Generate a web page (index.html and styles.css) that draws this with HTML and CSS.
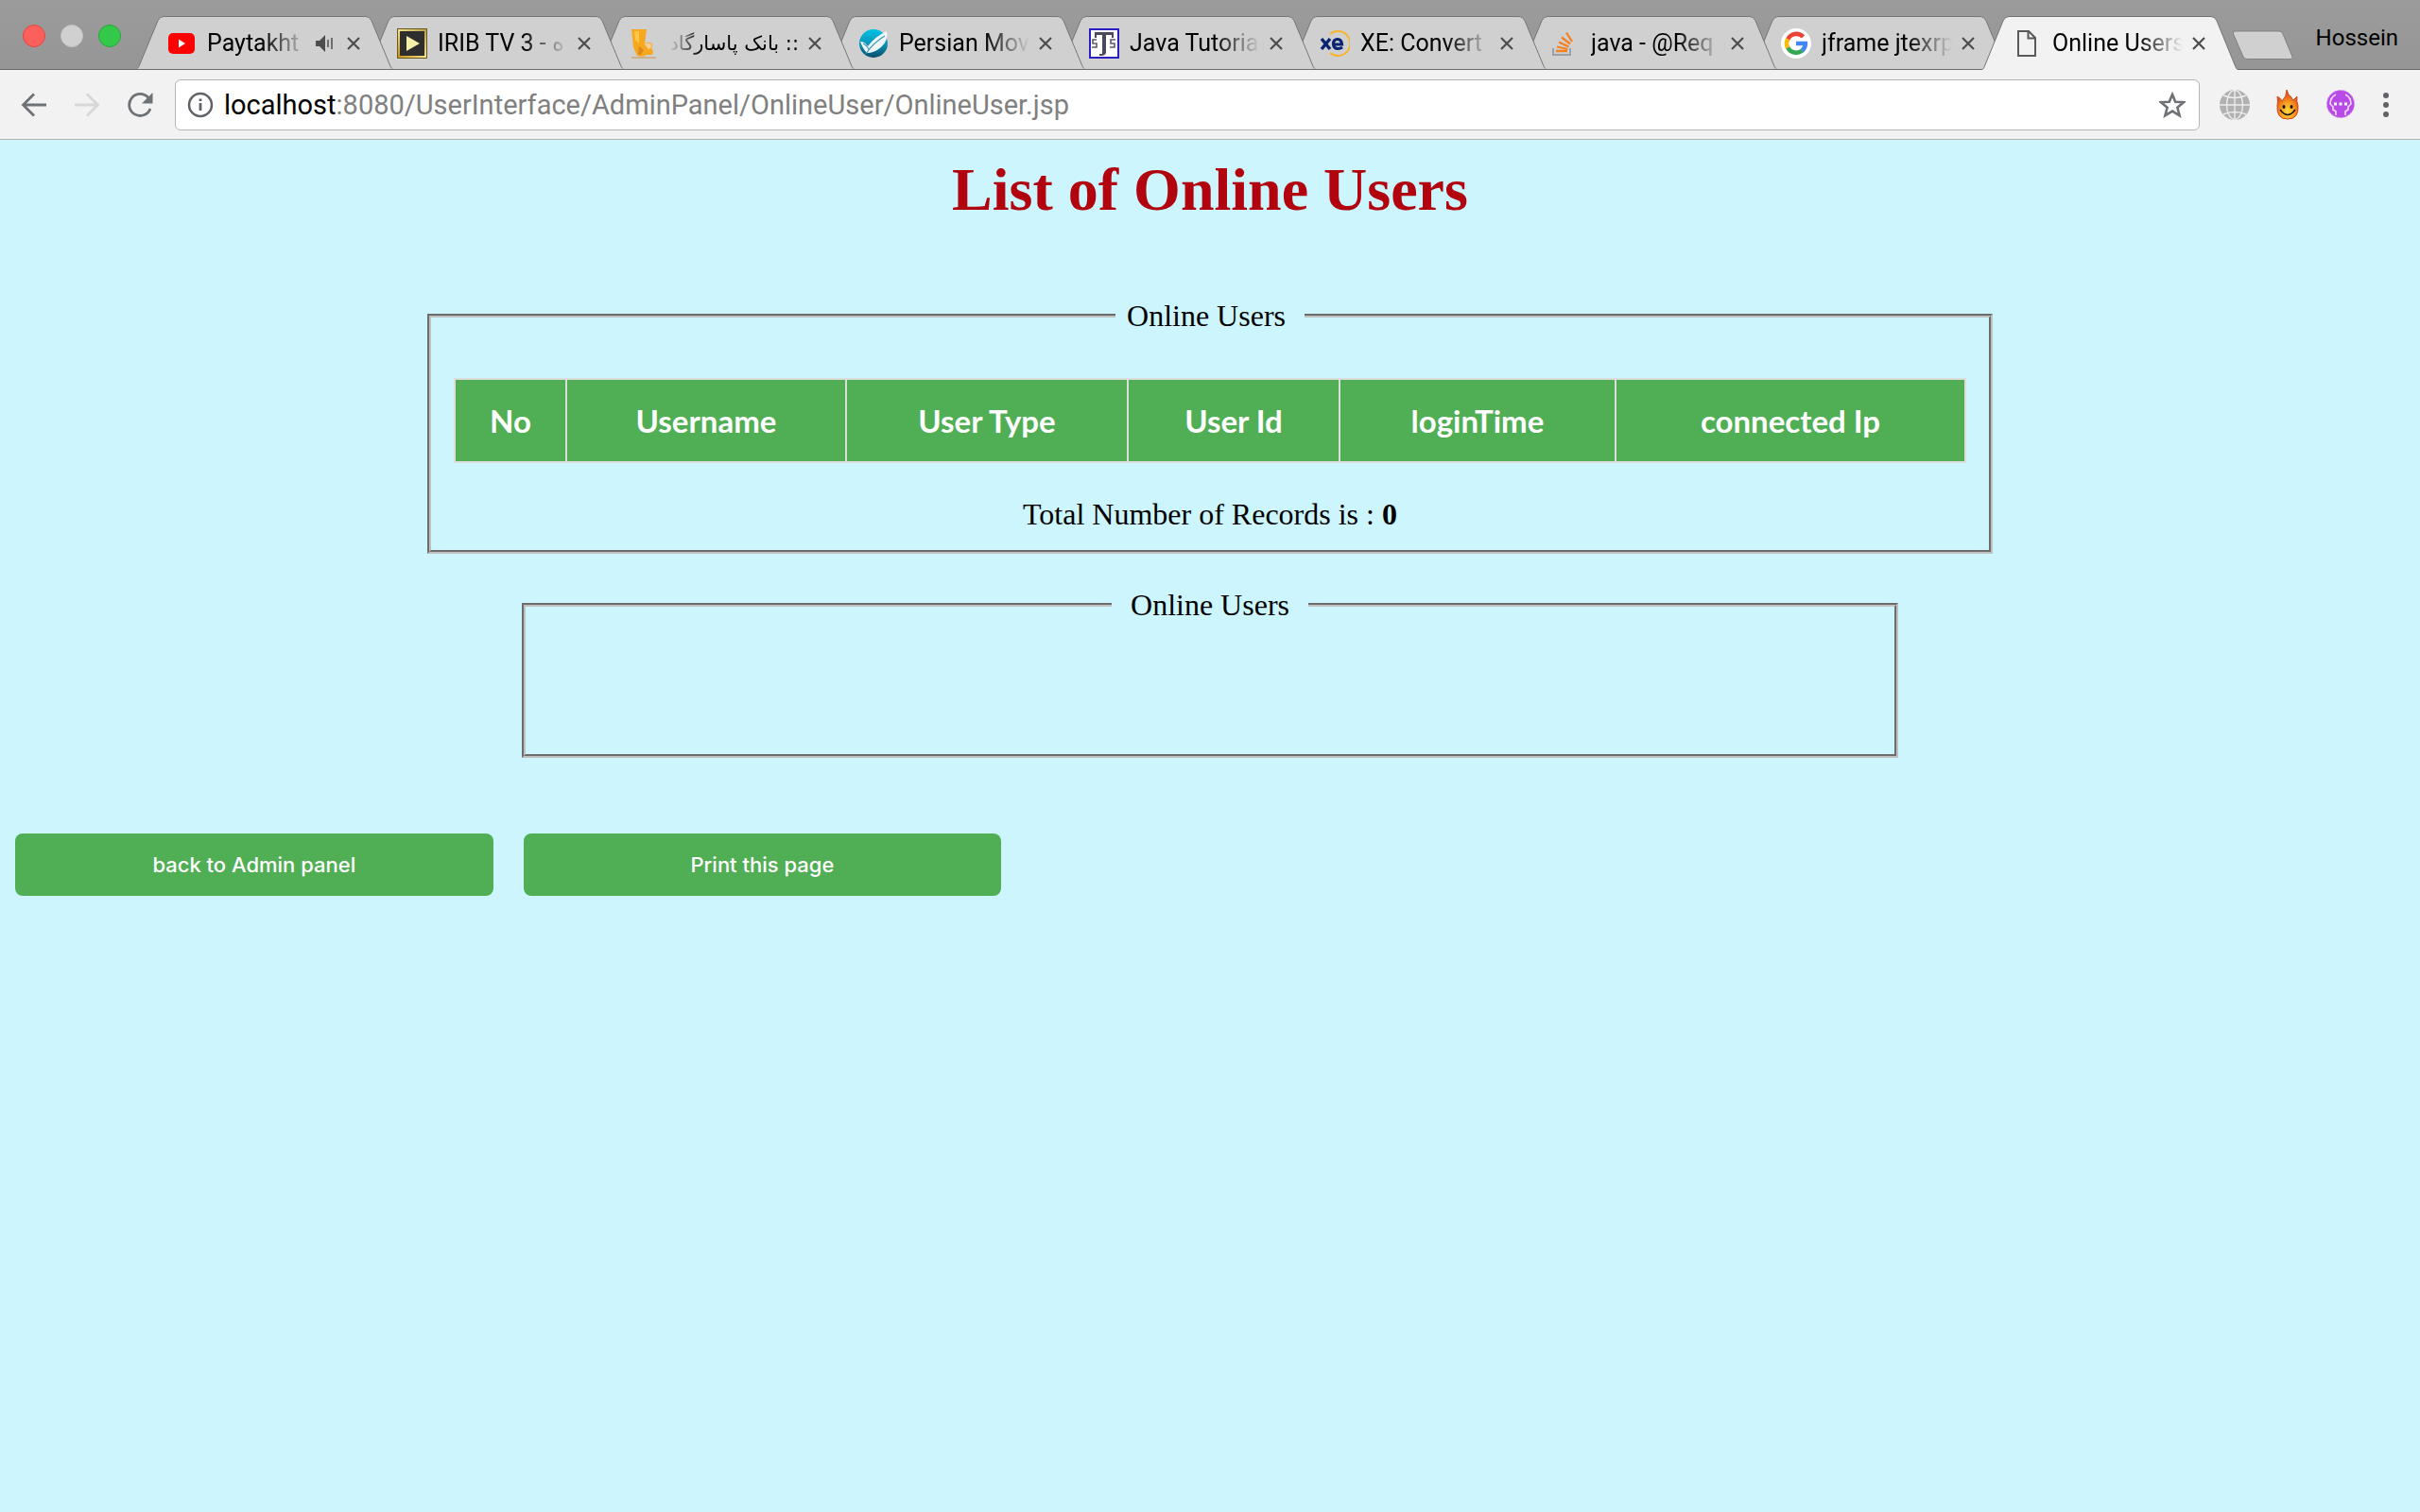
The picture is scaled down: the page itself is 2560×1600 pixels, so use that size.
FILE: index.html
```html
<!DOCTYPE html>
<html lang="en">
<head>
<meta charset="utf-8">
<title>Online Users</title>
<link rel="stylesheet" href="styles.css">
</head>
<body>
<svg class="defs" aria-hidden="true">
  <symbol id="tab-shape" viewBox="0 0 272 57" preserveAspectRatio="none"><path d="M0.5 57C2 56 2.500 55 3 54L23 5Q25 .5 29 .5H243Q247 .5 249 5L269 54C269.500 55 270 56 271.500 57" stroke-width="1"/></symbol>
  <symbol id="close" viewBox="0 0 16 16"><path d="M2 2L14 14M14 2L2 14" fill="none" stroke="#4d4d4d" stroke-width="2.200"/></symbol>
</svg>
<header class="browser">
  <div class="titlebar">
    <div class="lights"><span class="light red"></span><span class="light grey"></span><span class="light green"></span></div>
    <nav class="tabs">
      <div class="tab">
        <svg class="shape"><use href="#tab-shape"/></svg>
        <svg class="icon" viewBox="0 0 32 32"><rect x="2" y="5" width="28" height="22" rx="5" fill="#f00"/><path d="M13 11.500L20 16L13 20.500Z" fill="#fff"/></svg>
        <span class="name">Paytakht</span>
        <svg class="audio" viewBox="0 0 20 20"><path d="M1 7H5L11 1V19L5 13H1Z" fill="#4d4d4d"/><path d="M14 6V14M18 4V16" stroke="#4d4d4d" stroke-width="1.500"/></svg>
        <button class="close" aria-label="Close tab"><svg><use href="#close"/></svg></button>
      </div>
      <div class="tab">
        <svg class="shape"><use href="#tab-shape"/></svg>
        <svg class="icon" viewBox="0 0 32 32"><defs><linearGradient id="gold" x1="0" y1="1" x2="1" y2="0"><stop offset="0" stop-color="#c8981c"/><stop offset=".5" stop-color="#f3e08a"/><stop offset="1" stop-color="#b9a24b"/></linearGradient></defs><rect x=".5" y=".5" width="31" height="31" fill="#2e2e2e" stroke="#6b5a20"/><rect x="2" y="2" width="28" height="28" fill="#2e2e2e" stroke="url(#gold)" stroke-width="2"/><path d="M10 8L24 16L10 24Z" fill="#f6efa8"/></svg>
        <span class="name">IRIB TV 3 - ه</span>
        <button class="close" aria-label="Close tab"><svg><use href="#close"/></svg></button>
      </div>
      <div class="tab">
        <svg class="shape"><use href="#tab-shape"/></svg>
        <svg class="icon" viewBox="0 0 32 32"><path d="M4 31H30" stroke="#cdb08c" stroke-width="2"/><path d="M4 1H20L18 17Q20 14 24 15Q28 17 25 21Q28 24 26 28H20Q17 31 10 29L6 20Z" fill="#f6a821"/><path d="M7 3H12V16L8 12Z" fill="#fcc944"/><path d="M18 17Q22 14 25 17Q26 21 22 22Z" fill="#f3cf9a"/><path d="M12 19L17 23L14 28H11Z" fill="#dd8a1a"/></svg>
        <span class="name rtl" dir="rtl">:: بانک پاسارگاد</span>
        <button class="close" aria-label="Close tab"><svg><use href="#close"/></svg></button>
      </div>
      <div class="tab">
        <svg class="shape"><use href="#tab-shape"/></svg>
        <svg class="icon" viewBox="0 0 32 32"><defs><linearGradient id="sea" x1="0" y1="0" x2="0" y2="1"><stop offset="0" stop-color="#00c4e6"/><stop offset=".55" stop-color="#0b8fb5"/><stop offset="1" stop-color="#064b68"/></linearGradient></defs><circle cx="16" cy="16" r="15" fill="url(#sea)"/><path d="M2 14Q7 14 10 19Q17 9 30 3Q32 13 24 20Q17 26 9 26Q5 22 2 14Z" fill="#eef6f8"/><path d="M8 27Q16 15 28 8M11 22Q8 17 5 16" fill="none" stroke="#3497b5" stroke-width="1.200"/></svg>
        <span class="name">Persian Mov</span>
        <button class="close" aria-label="Close tab"><svg><use href="#close"/></svg></button>
      </div>
      <div class="tab">
        <svg class="shape"><use href="#tab-shape"/></svg>
        <svg class="icon" viewBox="0 0 32 32"><rect x="1" y="1" width="30" height="30" fill="#fff" stroke="#2a1fc0" stroke-width="2"/><path d="M6 4H26V10H24V7H18V26Q17 29 13 29H11V27H14V7H8V10H6Z" fill="#4a4a58"/><path d="M8 12H4V16H8V20H3M28 12H23V16H27V20H22" fill="none" stroke="#5b5b6c" stroke-width="1.600"/></svg>
        <span class="name">Java Tutoria</span>
        <button class="close" aria-label="Close tab"><svg><use href="#close"/></svg></button>
      </div>
      <div class="tab">
        <svg class="shape"><use href="#tab-shape"/></svg>
        <svg class="icon" viewBox="0 0 32 32"><path d="M11 6A13 13 0 1 1 11 26" fill="none" stroke="#f7b52c" stroke-width="2"/><path d="M2 11L11 22M11 11L2 22" stroke="#0a2472" stroke-width="3.500"/><path d="M15 17H23.500Q23 11.500 19 11.500Q14.500 11.500 14.500 16.500Q14.500 21.500 19.500 21.500Q22 21.500 24 20" fill="none" stroke="#0a2472" stroke-width="3.200"/></svg>
        <span class="name">XE: Convert</span>
        <button class="close" aria-label="Close tab"><svg><use href="#close"/></svg></button>
      </div>
      <div class="tab">
        <svg class="shape"><use href="#tab-shape"/></svg>
        <svg class="icon" viewBox="0 0 32 32"><path d="M3 21V28H21V21" fill="none" stroke="#9aa1a8" stroke-width="2"/><path d="M6 24H18M7 19.500L18.500 22M9 14.500L19.500 19.500M12 9.500L21 16.500M17 4.500L23 14" stroke="#f48024" stroke-width="2.300"/></svg>
        <span class="name">java - @Req</span>
        <button class="close" aria-label="Close tab"><svg><use href="#close"/></svg></button>
      </div>
      <div class="tab">
        <svg class="shape"><use href="#tab-shape"/></svg>
        <svg class="icon" viewBox="0 0 32 32"><circle cx="16" cy="16" r="16" fill="#fff"/><g fill="none" stroke-width="4.600"><path d="M23.500 9A10 10 0 0 0 7.300 11.500" stroke="#ea4335"/><path d="M7.300 11.200A10 10 0 0 0 7.300 20.800" stroke="#fbbc05"/><path d="M7.300 20.500A10 10 0 0 0 22.500 23.500" stroke="#34a853"/><path d="M22.300 23.700A10 10 0 0 0 25.800 16H16" stroke="#4285f4"/></g></svg>
        <span class="name">jframe jtexrp</span>
        <button class="close" aria-label="Close tab"><svg><use href="#close"/></svg></button>
      </div>
      <div class="tab active">
        <svg class="shape"><use href="#tab-shape"/></svg>
        <svg class="icon" viewBox="0 0 32 32"><path d="M7 3H18L25 10V29H7ZM17.500 3.500V10.500H25" fill="none" stroke="#5a5a5a" stroke-width="2"/></svg>
        <span class="name">Online Users</span>
        <button class="close" aria-label="Close tab"><svg><use href="#close"/></svg></button>
      </div>
    </nav>
    <button class="new-tab" aria-label="New tab"><svg viewBox="0 0 66 32"><path d="M3 1H50Q53 1 54 4L64 28Q65 30.500 62 30.500H16Q13 30.500 12 28L1.500 4Q.5 1 3 1Z" fill="#d0d0d0" stroke="#808080"/></svg></button>
    <span class="profile">Hossein</span>
  </div>
  <div class="toolbar">
    <button class="tool" aria-label="Back"><svg viewBox="0 0 28 28"><path d="M27 14H3M14 2.500L2.500 14L14 25.500" fill="none" stroke="#6e7276" stroke-width="2.800"/></svg></button>
    <button class="tool" aria-label="Forward"><svg viewBox="0 0 28 28"><path d="M1 14H25M14 2.500L25.500 14L14 25.500" fill="none" stroke="#d6d7d8" stroke-width="2.800"/></svg></button>
    <button class="tool" aria-label="Reload"><svg viewBox="0 0 28 28"><path d="M23 6.500A11.500 11.500 0 1 0 25 18" fill="none" stroke="#6e7276" stroke-width="2.800"/><path d="M27.500 1V12.500H16Z" fill="#6e7276"/></svg></button>
    <div class="address">
      <svg class="glyph" viewBox="0 0 28 28"><circle cx="14" cy="14" r="12" fill="none" stroke="#5f6368" stroke-width="2.500"/><path d="M14 12V20M14 7.500V10" stroke="#5f6368" stroke-width="2.800"/></svg>
      <span class="url"><span class="host">localhost</span>:8080/UserInterface/AdminPanel/OnlineUser/OnlineUser.jsp</span>
      <button class="tool" aria-label="Bookmark"><svg viewBox="0 0 28 28"><path d="M14 3L17.200 10.700L26 11.200L19.400 16.700L21.600 25.300L14 20.600L6.400 25.300L8.600 16.700L2 11.200L10.800 10.700Z" fill="none" stroke="#6e7276" stroke-width="2.600"/></svg></button>
    </div>
    <div class="extensions">
      <svg class="ext" viewBox="0 0 32 32"><circle cx="16" cy="16" r="16" fill="#b1b1b1"/><g fill="none" stroke="#ececec" stroke-width="1.400"><ellipse cx="16" cy="16" rx="8.500" ry="15.500"/><path d="M16 0V32M0 16H32M4 6Q16 11 28 6M4 26Q16 21 28 26"/></g></svg>
      <svg class="ext" viewBox="0 0 32 32"><defs><radialGradient id="fire" cx=".5" cy=".75" r=".6"><stop offset="0" stop-color="#ffd93b"/><stop offset=".5" stop-color="#f9a11f"/><stop offset="1" stop-color="#e2501c"/></radialGradient></defs><path d="M15 0Q16 5 20 8Q21 11 22 11Q24 9 26 7Q25 12 27 17Q28 31 16 31Q4 31 5 17Q6 12 5 7Q9 9 10 12Q15 7 15 0Z" fill="url(#fire)" stroke="#cf4a1b"/><ellipse cx="12" cy="18" rx="1.500" ry="2" fill="#1c1208"/><ellipse cx="20" cy="18" rx="1.500" ry="2" fill="#1c1208"/><path d="M8 21Q16 32 24 21" fill="none" stroke="#1c1208" stroke-width="1.500"/></svg>
      <svg class="ext" viewBox="0 0 32 32"><circle cx="16" cy="15" r="14.500" fill="#b84be8" stroke="#d58af5" stroke-dasharray="3 2"/><path d="M11 5Q5 8 5 15L8 18V21L11 23V27M21 5Q27 8 27 15L24 18V21L21 23V27" fill="none" stroke="#f3dcfd" stroke-width="1.600"/><path d="M9 15H12M14.500 15H17.500M20 15H23" stroke="#fff" stroke-width="3"/></svg>
    </div>
    <button class="tool menu" aria-label="Menu"><svg viewBox="0 0 28 28"><g fill="#5f6368"><circle cx="14" cy="4" r="3"/><circle cx="14" cy="14" r="3"/><circle cx="14" cy="24" r="3"/></g></svg></button>
  </div>
</header>
<main class="page">
  <h1>List of Online Users</h1>
  <fieldset class="panel users">
    <legend>&nbsp;Online Users&nbsp;&nbsp;</legend>
    <table class="grid">
      <colgroup><col class="c-no"><col class="c-name"><col class="c-type"><col class="c-id"><col class="c-time"><col class="c-ip"></colgroup>
      <thead><tr><th scope="col">No</th><th scope="col">Username</th><th scope="col">User Type</th><th scope="col">User Id</th><th scope="col">loginTime</th><th scope="col">connected Ip</th></tr></thead>
    </table>
    <p class="total">Total Number of Records is : <b>0</b></p>
  </fieldset>
  <fieldset class="panel empty">
    <legend>&nbsp;&nbsp;Online Users&nbsp;&nbsp;</legend>
  </fieldset>
  <div class="actions">
    <button class="action">back to Admin panel</button>
    <button class="action">Print this page</button>
  </div>
</main>
</body>
</html>
```
FILE: styles.css
```css
* { box-sizing: border-box; }

body {
  margin: 0;
  min-height: 100vh;
  background: #ccf5fe;
  color: #000;
  font-family: "Liberation Serif", "Times New Roman", serif;
  font-size: 32px;
}

button {
  padding: 0;
  border: 0;
  background: none;
  font: inherit;
}

svg { display: block; }
.defs { position: absolute; width: 0; height: 0; }

/* Browser window */
.browser { font-family: Roboto, "DejaVu Sans", sans-serif; }

.titlebar {
  display: flex;
  align-items: flex-end;
  height: 74px;
  padding-left: 24px;
  background: linear-gradient(#9b9b9b, #969696);
  box-shadow: inset 0 -1px #6b6b6b;
}

.lights {
  display: flex;
  gap: 16px;
  width: 120px;
  padding-bottom: 24px;
}

.light {
  width: 24px;
  height: 24px;
  border: 1px solid;
  border-radius: 50%;
}
.light.red { background: #fc605c; border-color: #e04642; }
.light.grey { background: #d0d0d0; border-color: #c2c2c2; }
.light.green { background: #34c84a; border-color: #24a838; }

.tabs { display: flex; }

.tab {
  position: relative;
  display: flex;
  align-items: center;
  width: 272px;
  height: 57px;
  padding: 0 34px 0 32px;
  font-size: 25px;
  line-height: 32px;
}
.tab + .tab { margin-left: -28px; }
.tab:nth-child(1) { z-index: 8; }
.tab:nth-child(2) { z-index: 7; }
.tab:nth-child(3) { z-index: 6; }
.tab:nth-child(4) { z-index: 5; }
.tab:nth-child(5) { z-index: 4; }
.tab:nth-child(6) { z-index: 3; }
.tab:nth-child(7) { z-index: 2; }
.tab:nth-child(8) { z-index: 1; }
.tab.active { z-index: 9; }

.shape {
  position: absolute;
  inset: 0;
  z-index: -1;
  width: 100%;
  height: 100%;
  fill: #d0d0d0;
  stroke: #757575;
}
.tab:not(.active) .shape { height: 56px; }
.tab.active .shape { fill: #f2f2f2; }

.icon {
  flex: none;
  width: 32px;
  height: 32px;
}

.name {
  flex: 1;
  margin-left: 11px;
  overflow: hidden;
  white-space: nowrap;
  mask-image: linear-gradient(to left, transparent, #000 48px);
}
.name.rtl {
  font-family: "DejaVu Sans", sans-serif;
  font-size: 21px;
  mask-image: linear-gradient(to right, transparent, #000 36px);
}

.audio {
  flex: none;
  width: 20px;
  height: 20px;
  margin: 0 4px 0 8px;
}

.close { flex: none; margin-left: 9px; }
.close svg { width: 16px; height: 16px; }

.new-tab { margin: 0 0 10px -7px; z-index: 1; }
.new-tab svg { width: 66px; height: 32px; }

.profile {
  margin-left: auto;
  padding: 0 23px 18px 0;
  font-size: 24px;
  line-height: 32px;
}

.toolbar {
  display: flex;
  align-items: center;
  height: 74px;
  padding: 0 22px;
  background: #f2f2f2;
  border-bottom: 1px solid #b2b2b2;
}

.tool { flex: none; margin-right: 28px; }
.tool svg { width: 28px; height: 28px; }
.tool.menu { margin: 0; }

.address {
  flex: 1;
  display: flex;
  align-items: center;
  height: 54px;
  margin-left: -5px;
  padding: 0 12px;
  background: #fff;
  border: 1px solid #b5b5b5;
  border-radius: 6px;
}
.address .tool { margin: 0 2px 0 auto; }

.glyph { width: 28px; height: 28px; }

.url {
  margin-left: 11px;
  color: #808080;
  font-size: 29px;
  line-height: 40px;
  white-space: nowrap;
}
.host { color: #000; }

.extensions {
  display: flex;
  gap: 24px;
  margin: 0 18px 0 21px;
}
.ext { width: 32px; height: 32px; }

/* Page */
.page { padding: 16px; }

h1 {
  margin: 0 0 78px;
  color: #b2040e;
  font-size: 64px;
  line-height: 74px;
  text-align: center;
}

.panel {
  width: 100%;
  margin: 0 auto 36px;
  padding: 0 24px;
  border: 4px groove #c0c0c0;
}
.panel legend {
  margin: 0 auto;
  padding: 0 4px;
  line-height: 36px;
}

.users { max-width: 1656px; }
.empty { max-width: 1456px; height: 180px; }

.grid {
  width: 100%;
  margin-top: 48px;
  border-collapse: collapse;
  table-layout: fixed;
}
.c-no { width: 118px; }
.c-name { width: 296px; }
.c-type { width: 298px; }
.c-id { width: 224px; }
.c-time { width: 292px; }
.c-ip { width: 370px; }

.grid th {
  padding: 24px 0;
  border: 2px solid #ddd;
  background: #50ae55;
  color: #fff;
  font-family: "Trebuchet MS", Lato, sans-serif;
  font-size: 33px;
  line-height: 38px;
}

.total {
  margin: 36px 0 20px;
  line-height: 36px;
  text-align: center;
}

.actions {
  display: flex;
  gap: 32px;
  padding-top: 44px;
}

.action {
  width: 20%;
  height: 66px;
  border-radius: 8px;
  background: #50ae55;
  color: #fff;
  font-family: Inter, sans-serif;
  font-size: 22px;
  font-weight: 500;
}
```
